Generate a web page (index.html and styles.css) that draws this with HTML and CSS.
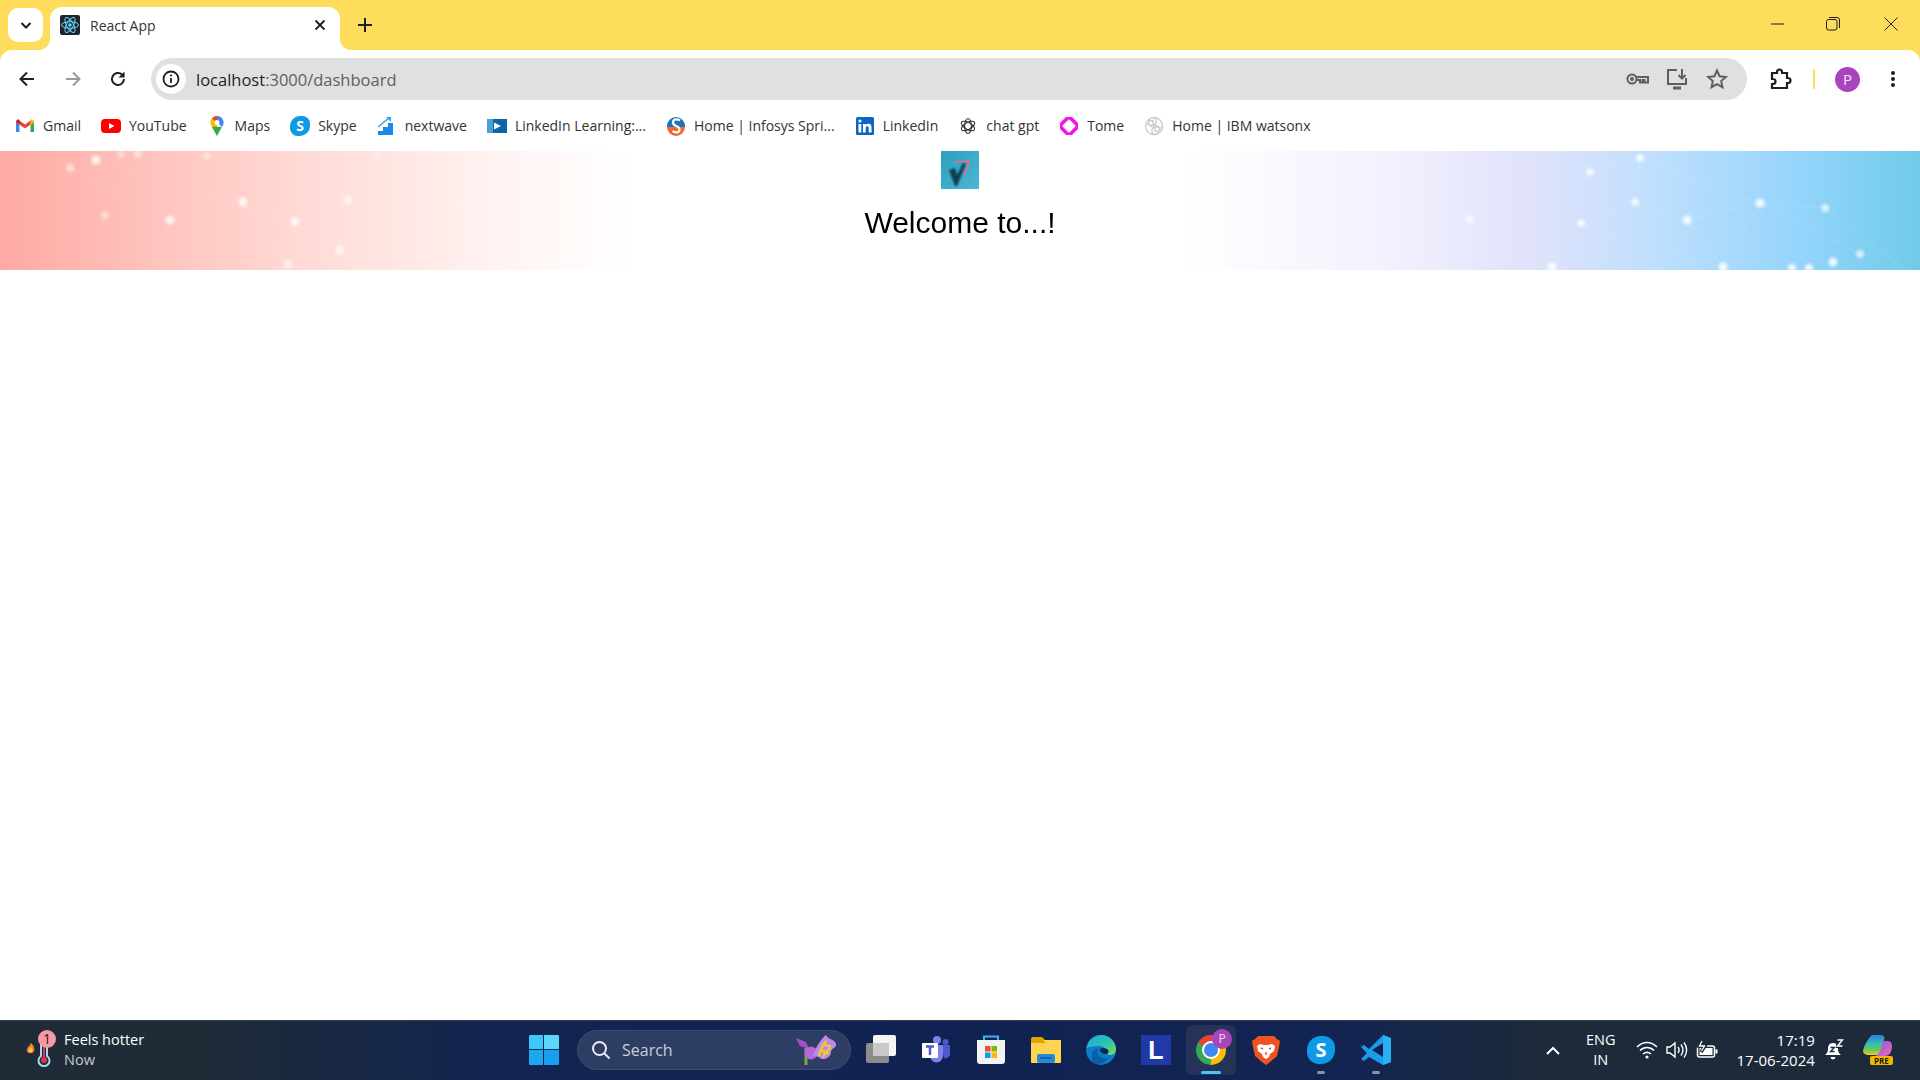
FILE: index.html
```html
<!DOCTYPE html>
<html lang="en">
  <head>
    <meta charset="UTF-8" />
    <meta name="viewport" content="width=device-width, initial-scale=1.0" />
    <title>React App</title>
    <link rel="stylesheet" href="styles.css">
  </head>
  <body>
    <div class="browser">
      <div class="tabstrip">
        <div class="tab-search">
          <svg width="14" height="14" viewBox="0 0 14 14"><path d="M2.5 5l4.5 4.5L11.500 5" fill="none" stroke="#1f1f1f" stroke-width="2"/></svg>
        </div>
        <div class="tab">
          <svg class="favicon" viewBox="0 0 20 20">
            <rect width="20" height="20" rx="2" fill="#20232a"/>
            <g fill="none" stroke="#61dafb" stroke-width="1">
              <ellipse cx="10" cy="10" rx="8.500" ry="3.300"/>
              <ellipse cx="10" cy="10" rx="8.500" ry="3.300" transform="rotate(60 10 10)"/>
              <ellipse cx="10" cy="10" rx="8.500" ry="3.300" transform="rotate(120 10 10)"/>
            </g>
            <circle cx="10" cy="10" r="1.700" fill="#61dafb"/>
          </svg>
          <span class="tab-title">React App</span>
          <svg class="tab-close" width="12" height="12" viewBox="0 0 12 12"><path d="M1.500 1.500l9 9M10.500 1.500l-9 9" stroke="#1f1f1f" stroke-width="1.800"/></svg>
        </div>
        <svg class="new-tab" width="14" height="14" viewBox="0 0 14 14"><path d="M7 0v14M0 7h14" stroke="#1f1f1f" stroke-width="2"/></svg>
        <div class="window-controls">
          <svg width="14" height="14" viewBox="0 0 14 14"><path d="M0 7h13" stroke="#1f1f1f" stroke-width="1"/></svg>
          <svg width="14" height="14" viewBox="0 0 14 14" fill="none" stroke="#1f1f1f" stroke-width="1"><rect x="0.500" y="2.500" width="10.500" height="10.500" rx="2"/><path d="M3 .5h8a2.500 2.500 0 0 1 2.500 2.500v8"/></svg>
          <svg width="14" height="14" viewBox="0 0 14 14"><path d="M.5.500l13 13M13.500.500l-13 13" stroke="#1f1f1f" stroke-width="1"/></svg>
        </div>
      </div>

      <div class="toolbar">
        <div class="nav-buttons">
          <svg width="18" height="18" viewBox="0 0 18 18" fill="none" stroke="#1f1f1f" stroke-width="2"><path d="M16 9H3M9 2.500L2.500 9 9 15.500"/></svg>
          <svg width="18" height="18" viewBox="0 0 18 18" fill="none" stroke="#9a9a9a" stroke-width="2"><path d="M2 9h13M9 2.500L15.500 9 9 15.500"/></svg>
          <svg width="18" height="18" viewBox="0 0 18 18" fill="none" stroke="#1f1f1f" stroke-width="2"><path d="M15 9a6 6 0 1 1-1.800-4.300L15 6.500"/><path d="M15.500 1.500v6h-6" fill="#1f1f1f" stroke="none"/></svg>
        </div>
        <div class="address-bar">
          <div class="site-info">
            <svg width="18" height="18" viewBox="0 0 18 18"><circle cx="9" cy="9" r="7.500" fill="none" stroke="#1f1f1f" stroke-width="1.800"/><path d="M9 8v5" stroke="#1f1f1f" stroke-width="1.800"/><circle cx="9" cy="5.500" r="1.100" fill="#1f1f1f"/></svg>
          </div>
          <div class="url"><span class="url-host">localhost</span>:3000/dashboard</div>
          <div class="address-actions">
            <svg width="24" height="24" viewBox="0 0 24 24" fill="none" stroke="#5f5f5f" stroke-width="2"><circle cx="7" cy="12" r="4.500"/><circle cx="7" cy="12" r="1" fill="#5f5f5f"/><path d="M11.500 10H23v5.500h-3.500V13h-2v2.500h-2.500V13h-3.500"/></svg>
            <svg width="24" height="24" viewBox="0 0 24 24" fill="none" stroke="#5f5f5f" stroke-width="2"><path d="M12 3H3v14h18v-6"/><path d="M8 21h8" stroke-width="3"/><path d="M17 2v9M13.500 8l3.500 3.500L20.500 8"/></svg>
            <svg width="24" height="24" viewBox="0 0 24 24" fill="none" stroke="#5f5f5f" stroke-width="2"><path d="M12 3.500l2.600 5.700 6.200.7-4.600 4.200 1.300 6.100L12 17.100l-5.500 3.100 1.300-6.100-4.600-4.200 6.200-.7z"/></svg>
          </div>
        </div>
        <div class="toolbar-right">
          <svg class="puzzle" width="24" height="24" viewBox="0 0 24 24" fill="none" stroke="#1f1f1f" stroke-width="2.200"><path d="M4 6h5V5a2.500 2.500 0 0 1 5 0v1h5v5h1a2.500 2.500 0 0 1 0 5h-1v5H4v-4h1a2.500 2.500 0 0 0 0-5H4z"/></svg>
          <div class="toolbar-divider"></div>
          <div class="avatar">P</div>
          <svg class="kebab" width="6" height="18" viewBox="0 0 6 18" fill="#1f1f1f"><circle cx="3" cy="3" r="2"/><circle cx="3" cy="9" r="2"/><circle cx="3" cy="15" r="2"/></svg>
        </div>
      </div>

      <div class="bookmarks">
        <div class="bookmark">
          <svg viewBox="0 0 20 20"><path d="M1 6v10h3.500V9z" fill="#4285f4"/><path d="M15.500 9v7H19V6z" fill="#34a853"/><path d="M1 6l9 6.500L19 6l-2-2.500-7 5-7-5z" fill="#ea4335"/><path d="M1 6c0-2 2-3 3.500-2L4.500 9z" fill="#c5221f"/><path d="M19 6c0-2-2-3-3.500-2v5z" fill="#fbbc04"/></svg>
          <span>Gmail</span>
        </div>
        <div class="bookmark">
          <svg viewBox="0 0 20 20"><rect y="3" width="20" height="14" rx="4" fill="#f00"/><path d="M8 7l5.500 3L8 13z" fill="#fff"/></svg>
          <span>YouTube</span>
        </div>
        <div class="bookmark">
          <svg viewBox="0 0 20 20"><path d="M10 0a6.500 6.500 0 0 0-5 10.700L10 20z" fill="#fbbc04"/><path d="M5 10.700L10 20l5-9.300z" fill="#34a853"/><path d="M10 0a6.500 6.500 0 0 0-5 2.400l5 4.100z" fill="#ea4335"/><path d="M10 0a6.500 6.500 0 0 1 5 10.700L10 6.500z" fill="#4285f4"/><circle cx="10" cy="6.500" r="2.500" fill="#fff"/></svg>
          <span>Maps</span>
        </div>
        <div class="bookmark">
          <div class="skype-badge">S</div>
          <span>Skype</span>
        </div>
        <div class="bookmark">
          <svg viewBox="0 0 20 20"><path d="M1 19v-4h5v-4h5V7h5v12z" fill="#1a88e8"/><path d="M1 11L12 2" stroke="#2aa4f4" stroke-width="1.500"/><path d="M9 1h5v5z" fill="#2aa4f4"/></svg>
          <span>nextwave</span>
        </div>
        <div class="bookmark">
          <svg viewBox="0 0 20 20"><rect y="3" width="20" height="14" fill="#0a66a8"/><rect y="3" width="6" height="14" fill="#49a0d8"/><path d="M7 6.500l7 3.500-7 3.500z" fill="#fff"/></svg>
          <span>LinkedIn Learning:...</span>
        </div>
        <div class="bookmark">
          <svg viewBox="0 0 20 20"><path d="M1 11a9 9 0 0 0 9 9 9 9 0 0 0 9-9z" fill="#f26a2e"/><path d="M1 10a9 9 0 0 1 18 0v1H1z" fill="#1b75bb"/><path d="M14 4.500c-2.500-2-7-1.500-7 2 0 4.500 6.500 2.500 6.500 7 0 3.500-4.500 3.500-7 1.500" fill="none" stroke="#fff" stroke-width="2.200"/></svg>
          <span>Home | Infosys Spri...</span>
        </div>
        <div class="bookmark">
          <svg viewBox="0 0 20 20"><rect x="1" y="1" width="18" height="18" rx="1.500" fill="#0a66c2"/><rect x="3.500" y="8" width="2.800" height="8.500" fill="#fff"/><circle cx="4.900" cy="5" r="1.600" fill="#fff"/><path d="M8 8h2.700v1.200c.6-.9 1.600-1.400 2.800-1.400 2.300 0 3 1.500 3 3.800v4.900h-2.800v-4.300c0-1.200-.3-2-1.400-2-1.200 0-1.600.9-1.600 2v4.300H8z" fill="#fff"/></svg>
          <span>LinkedIn</span>
        </div>
        <div class="bookmark">
          <svg viewBox="0 0 20 20" fill="none" stroke="#333" stroke-width="1.100"><ellipse cx="10" cy="10" rx="3.400" ry="7.500"/><ellipse cx="10" cy="10" rx="3.400" ry="7.500" transform="rotate(60 10 10)"/><ellipse cx="10" cy="10" rx="3.400" ry="7.500" transform="rotate(120 10 10)"/></svg>
          <span>chat gpt</span>
        </div>
        <div class="bookmark">
          <svg viewBox="0 0 20 20"><path d="M7 1h6l6 6v6l-6 6H7l-6-6V7z" fill="#f312e8"/><path d="M10 4.500L15.500 10 10 15.500 4.500 10z" fill="#fff" stroke="#fff" stroke-width="2" stroke-linejoin="round"/></svg>
          <span>Tome</span>
        </div>
        <div class="bookmark">
          <svg viewBox="0 0 20 20" fill="none" stroke="#c9c9c9" stroke-width="1.300"><circle cx="10" cy="10" r="8.500"/><circle cx="7" cy="7" r="2.500"/><circle cx="13" cy="13" r="2.500"/><path d="M10 1.500c3 2 3 5 0 8.500s-3 6.500 0 8.500M2 8c3-1 4 1 6 3M18 12c-3 1-4-1-6-3"/></svg>
          <span>Home | IBM watsonx</span>
        </div>
      </div>
    </div>

    <div class="hero">
      <svg class="hero-dots" viewBox="0 0 1920 119" preserveAspectRatio="none">
        <defs><filter id="soft"><feGaussianBlur stdDeviation="1.500"/></filter></defs>
        <g fill="none" stroke="#fff" stroke-opacity=".13">
          <path d="M96 9L295 71 340 99M70 17L170 69M243 51L288 113M348 49L295 71"/>
          <path d="M1640 7L1635 51 1581 72 1552 116M1590 21L1640 7 1760 52 1825 57 1920 130M1635 51L1687 69 1760 52 1723 116 1687 69M1760 52L1860 103M1470 68L1470 119M1581 72L1723 116"/>
        </g>
        <g fill="#fff" filter="url(#soft)" opacity=".85">
          <circle cx="70" cy="17" r="4" opacity=".6"/><circle cx="96" cy="9" r="4.500"/><circle cx="121" cy="3" r="4" opacity=".5"/><circle cx="138" cy="3" r="4" opacity=".6"/>
          <circle cx="207" cy="5" r="4" opacity=".5"/><circle cx="377" cy="5" r="4" opacity=".4"/><circle cx="243" cy="51" r="4.500" opacity=".9"/><circle cx="348" cy="49" r="4.500" opacity=".7"/>
          <circle cx="459" cy="52" r="4" opacity=".3"/><circle cx="105" cy="64" r="4" opacity=".5"/><circle cx="170" cy="69" r="4.500" opacity=".9"/><circle cx="295" cy="71" r="4.500" opacity=".9"/>
          <circle cx="340" cy="99" r="4.500" opacity=".8"/><circle cx="288" cy="113" r="4.500" opacity=".7"/>
          <circle cx="1640" cy="7" r="4" opacity=".9"/><circle cx="1590" cy="21" r="4" opacity=".9"/><circle cx="1635" cy="51" r="4" opacity=".9"/><circle cx="1760" cy="52" r="4.500"/>
          <circle cx="1825" cy="57" r="4" opacity=".8"/><circle cx="1470" cy="68" r="4" opacity=".8"/><circle cx="1581" cy="72" r="4" opacity=".9"/><circle cx="1687" cy="69" r="4.500"/>
          <circle cx="1860" cy="103" r="4" opacity=".8"/><circle cx="1833" cy="111" r="4.500"/><circle cx="1552" cy="116" r="4.500"/><circle cx="1723" cy="116" r="4.500"/>
          <circle cx="1792" cy="117" r="4"/><circle cx="1809" cy="117" r="4"/>
        </g>
      </svg>
      <svg class="hero-logo" viewBox="0 0 38 38">
        <defs>
          <linearGradient id="logoBg" x1="0" y1="0" x2="1" y2="1"><stop offset="0" stop-color="#2f9fbb"/><stop offset="1" stop-color="#4cb7d3"/></linearGradient>
          <filter id="logoShade"><feGaussianBlur stdDeviation=".8"/></filter>
        </defs>
        <rect width="38" height="38" fill="url(#logoBg)"/>
        <path d="M8 19l6-2 2 7 6-12 3 1-9 22h-2z" fill="#0a3a52" filter="url(#logoShade)"/>
        <path d="M14 10.500h14l-5 14" fill="none" stroke="#f0688f" stroke-width="1.600"/>
      </svg>
      <h1 class="hero-title">Welcome to...!</h1>
    </div>

    <div class="content"></div>

    <div class="taskbar">
      <div class="weather">
        <svg class="weather-icon" width="36" height="40" viewBox="0 0 36 40">
          <path d="M11 14c3 3 4 5 3 8s-6 3-7 0 2-4 4-8z" fill="#f08030"/>
          <path d="M11 18c1 2 2 3 1 4.500s-3 1-3.500 0 1-2 2.500-4.500z" fill="#ffd050"/>
          <path d="M21 8v19a5.500 5.500 0 1 0 6 0V8z" fill="#1d2c3c" stroke="#a8d8f0" stroke-width="2"/>
          <circle cx="24" cy="31" r="3" fill="#e0334d"/>
          <path d="M24 18v12" stroke="#e0334d" stroke-width="2"/>
          <circle cx="27" cy="10" r="9" fill="#f79aa4"/>
          <text x="27" y="15" text-anchor="middle" class="weather-count">1</text>
        </svg>
        <div class="weather-text">
          <div class="weather-title">Feels hotter</div>
          <div class="weather-sub">Now</div>
        </div>
      </div>

      <div class="taskbar-apps">
        <div class="app">
          <svg viewBox="0 0 30 30"><path d="M0 1a1 1 0 0 1 1-1h13v14H0z" fill="#3cc8f8"/><path d="M15 0h14a1 1 0 0 1 1 1v13H15z" fill="#5ad8fc"/><path d="M0 15h14v15H1a1 1 0 0 1-1-1z" fill="#1ca8ee"/><path d="M15 15h15v14a1 1 0 0 1-1 1H15z" fill="#1a9cf0"/></svg>
        </div>
        <div class="search-box">
          <svg width="20" height="20" viewBox="0 0 20 20" fill="none" stroke="#e8ebf0" stroke-width="2"><circle cx="8.500" cy="8.500" r="6.500"/><path d="M13 13l5.500 5.500"/></svg>
          <span class="search-label">Search</span>
          <svg class="search-art" width="48" height="32" viewBox="0 0 48 32">
            <path d="M16 14v17" stroke="#6cae3a" stroke-width="3"/>
            <path d="M6 4l10 4 3 7-9-3z" fill="#a050c8"/>
            <circle cx="21" cy="19" r="6.500" fill="#b866d8"/>
            <path d="M23 22C26 12 32 4 36 1c2 5 9 4 10 9 1 4-5 4-5 8 0 6-8 9-11 6-2-2-5-1-7-2z" fill="#b98ae6"/>
            <path d="M29 22c1-6 3-10 7-15M33 23c2-4 4-7 8-9M30 16l9 4M33 10l8 3" stroke="#f0c830" stroke-width="2.500" fill="none"/>
          </svg>
        </div>
        <div class="app">
          <svg viewBox="0 0 30 30"><rect x="7" y="0" width="23" height="21" rx="2" fill="#f4f4f4"/><rect x="0" y="8" width="23" height="20" rx="2" fill="#8c8c8c"/><rect x="7" y="8" width="16" height="13" fill="#c9c9c9"/></svg>
        </div>
        <div class="app">
          <svg viewBox="0 0 30 30"><circle cx="16" cy="5" r="4" fill="#7b83eb"/><circle cx="24.500" cy="7" r="3" fill="#5059c9"/><path d="M20 10h9v9a4.500 4.500 0 0 1-6 4z" fill="#5059c9"/><path d="M9 10h13v11a6.500 6.500 0 0 1-13 0z" fill="#7b83eb"/><rect x="1" y="8" width="16" height="15" rx="1" fill="#fff"/><path d="M5 11.500h8M9 11.500V20" stroke="#5059c9" stroke-width="2.500"/></svg>
        </div>
        <div class="app">
          <svg viewBox="0 0 30 30"><path d="M8 5V1.500h14V5" fill="none" stroke="#35b8f0" stroke-width="2"/><path d="M1 5h28v21a3 3 0 0 1-3 3H4a3 3 0 0 1-3-3z" fill="#f3f3f3"/><rect x="9" y="11" width="5.500" height="5.500" fill="#f25022"/><rect x="15.500" y="11" width="5.500" height="5.500" fill="#7fba00"/><rect x="9" y="17.500" width="5.500" height="5.500" fill="#00a4ef"/><rect x="15.500" y="17.500" width="5.500" height="5.500" fill="#ffb900"/></svg>
        </div>
        <div class="app">
          <svg viewBox="0 0 30 30"><path d="M0 4a2 2 0 0 1 2-2h9l3 3h-14z" fill="#e0a300"/><path d="M0 5h30v22a1 1 0 0 1-1 1H1a1 1 0 0 1-1-1z" fill="#ffd54f"/><path d="M0 5h12l3 3H0z" fill="#e0a300"/><rect x="6" y="19" width="18" height="9" rx="2" fill="#2a88d8"/><path d="M9 23h12" stroke="#0f5fa8" stroke-width="1.500"/></svg>
        </div>
        <div class="app">
          <svg viewBox="0 0 30 30">
            <defs>
              <linearGradient id="edgeTop" x1="0" y1="0" x2="1" y2="1"><stop offset="0" stop-color="#1ba4d8"/><stop offset=".6" stop-color="#30c8a8"/><stop offset="1" stop-color="#7fdc5a"/></linearGradient>
            </defs>
            <circle cx="15" cy="15" r="15" fill="#0c7cc8"/>
            <path d="M.5 13C2 5 8 0 15 0c9 0 15 7 15 14 0 6-6 7-9 5 0-5-4-9-9-8-5 0-9 1-11.500 2z" fill="url(#edgeTop)"/>
            <path d="M12 13c-3 7 3 12 10 10-3 5-10 8-15 4-3-7 0-13 5-14z" fill="#0a5ca8"/>
            <path d="M21 19c-3 0-7-1-7-4 0-2 3-3 7-1 2 1 2 4 0 5z" fill="#0f2252"/>
          </svg>
        </div>
        <div class="app">
          <div class="app-letter">L</div>
        </div>
        <div class="app app-active">
          <div class="chrome-icon"><div class="chrome-core"></div></div>
          <div class="chrome-profile">P</div>
          <div class="app-indicator"></div>
        </div>
        <div class="app">
          <svg viewBox="0 0 30 30"><path d="M7 1h16l3 3 3 2-1 6-2 9-7 6-4 3-4-3-7-6-2-9-1-6 3-2z" fill="#f1521f"/><path d="M9 9l4 1h4l4-1 3 2-1 5-4 3-1 3-3 2-3-2-1-3-4-3-1-5z" fill="#fff"/><path d="M12 14l-2-1M18 14l2-1M15 17v3" stroke="#f1521f" stroke-width="1.500"/></svg>
        </div>
        <div class="app">
          <div class="skype-tile">S</div>
          <div class="app-dot"></div>
        </div>
        <div class="app">
          <svg viewBox="0 0 30 30"><path d="M22 0L8 14 3 10 0 12l6 6-6 6 3 2 5-4 14 8 8-3V3z" fill="#1a9ce8"/><path d="M22 0v30l8-3V3z" fill="#2bb0f4"/><path d="M22 8L11 15l11 7z" fill="#0f2252"/></svg>
          <div class="app-dot"></div>
        </div>
      </div>

      <div class="tray">
        <svg class="tray-chevron" width="14" height="9" viewBox="0 0 14 9"><path d="M1 8l6-6 6 6" fill="none" stroke="#fff" stroke-width="2"/></svg>
        <div class="tray-lang"><div>ENG</div><div>IN</div></div>
        <div class="tray-icons">
          <svg width="22" height="20" viewBox="0 0 22 20" fill="none" stroke="#fff" stroke-width="1.600"><path d="M1 7c6-6 14-6 20 0M4 10.500c4-4 10-4 14 0M7 14c2.500-2 5.500-2 8 0"/><circle cx="11" cy="17" r="1.600" fill="#fff" stroke="none"/></svg>
          <svg width="22" height="20" viewBox="0 0 22 20" fill="none" stroke="#fff" stroke-width="1.400"><path d="M1 7v6h3l5 4V3L4 7z"/><path d="M12 7c1.500 2 1.500 4 0 6M15 4.500c2.500 3.500 2.500 7.500 0 11M18 2.500c3.500 4.500 3.500 10.500 0 15"/></svg>
          <svg width="22" height="20" viewBox="0 0 22 20"><rect x="1.500" y="6" width="17" height="11" rx="2" fill="none" stroke="#fff" stroke-width="1.500"/><rect x="3.500" y="8" width="13" height="7" fill="#fff"/><rect x="19.500" y="9.500" width="2" height="4" fill="#fff"/><path d="M6 0L3 6h6l-4 6" fill="none" stroke="#1c2a3a" stroke-width="3.500"/><path d="M6 1L3.500 6h5L5.500 11" fill="none" stroke="#fff" stroke-width="1.300"/></svg>
        </div>
        <div class="tray-clock"><div>17:19</div><div>17-06-2024</div></div>
        <svg class="tray-bell" width="20" height="22" viewBox="0 0 20 22"><path d="M9 4c-4 0-5 3-5 6 0 3-1 4-3 6h16c-2-2-3-3-3-6 0-3-1-6-5-6z" fill="#fff"/><path d="M6.500 18a2.500 2.500 0 0 0 5 0z" fill="#fff"/><path d="M6.500 8.500h4l-4 4h4" fill="none" stroke="#1c2a3a" stroke-width="1.300"/><rect x="12" y="0" width="8" height="9" fill="#1c2a3a"/><path d="M13.500 1h5l-5 6h5" fill="none" stroke="#fff" stroke-width="1.500"/></svg>
        <div class="copilot">
          <svg width="29" height="23" viewBox="0 0 29 23">
            <defs>
              <linearGradient id="cpLeft" x1="0" y1="0" x2="0" y2="1"><stop offset="0" stop-color="#2a7ce0"/><stop offset=".45" stop-color="#38c0b0"/><stop offset=".75" stop-color="#70c850"/><stop offset="1" stop-color="#e8d030"/></linearGradient>
              <linearGradient id="cpRight" x1="0" y1="0" x2="1" y2="1"><stop offset="0" stop-color="#7a5ae8"/><stop offset="1" stop-color="#f868b0"/></linearGradient>
            </defs>
            <path d="M9 0h9c2 0 3 1 3.500 3L17 20H6c-4 0-6-2-6-4 0-2 4-12 9-16z" fill="url(#cpLeft)"/>
            <path d="M20 6h5c3 0 4 3 4 5 0 5-2 10-7 10H12c4-1 6-6 8-15z" fill="url(#cpRight)"/>
          </svg>
          <span class="copilot-tag">PRE</span>
        </div>
      </div>
    </div>
  </body>
</html>
```

FILE: styles.css
```css
html, body {
  margin: 0;
  padding: 0;
  height: 100%;
}

body {
  display: flex;
  flex-direction: column;
  height: 100vh;
  overflow: hidden;
  background-color: #fff;
  font-family: "Open Sans", "Noto Sans", sans-serif;
  color: #1f1f1f;
}

/* browser chrome */
.browser {
  background-color: #ffdd5c;
}

.tabstrip {
  display: flex;
  align-items: flex-end;
  height: 50px;
  position: relative;
}

.tab-search {
  display: flex;
  align-items: center;
  justify-content: center;
  width: 35px;
  height: 34px;
  margin: 0 0 8px 8px;
  background-color: #fff;
  border-radius: 10px;
}

.tab {
  display: flex;
  align-items: center;
  width: 290px;
  height: 43px;
  box-sizing: border-box;
  margin-left: 7px;
  padding: 0 14px 7px 10px;
  background-color: #fff;
  border-radius: 12px 12px 0 0;
  position: relative;
}

.tab::before,
.tab::after {
  content: "";
  position: absolute;
  bottom: 0;
  width: 12px;
  height: 12px;
}

.tab::before {
  left: -12px;
  background: radial-gradient(circle at 0 0, transparent 12px, #fff 12.500px);
}

.tab::after {
  right: -12px;
  background: radial-gradient(circle at 100% 0, transparent 12px, #fff 12.500px);
}

.favicon {
  width: 20px;
  height: 20px;
  flex: none;
}

.tab-title {
  flex: 1;
  margin-left: 10px;
  font-size: 14px;
  color: #333;
}

.tab-close {
  flex: none;
}

.new-tab {
  margin: 0 0 18px 18px;
}

.window-controls {
  display: flex;
  align-items: center;
  gap: 41px;
  margin: 0 22px 19px auto;
}

.window-controls svg:last-child {
  margin-left: 3px;
}

.toolbar {
  display: flex;
  align-items: center;
  height: 58px;
  background-color: #fff;
  border-radius: 12px 12px 0 0;
}

.nav-buttons {
  display: flex;
  align-items: center;
  gap: 27.500px;
  width: 151px;
  box-sizing: border-box;
  padding-left: 18px;
}

.address-bar {
  display: flex;
  align-items: center;
  width: 1596px;
  height: 42px;
  box-sizing: border-box;
  padding: 0 18px 0 5px;
  background-color: #e0e0e0;
  border-radius: 21px;
}

.site-info {
  display: flex;
  align-items: center;
  justify-content: center;
  width: 30px;
  height: 30px;
  background-color: #fff;
  border-radius: 50%;
}

.url {
  flex: 1;
  margin-left: 10px;
  font-size: 16.500px;
  color: #5f5f5f;
}

.url-host {
  color: #1f1f1f;
}

.address-actions {
  display: flex;
  align-items: center;
  gap: 16px;
}

.toolbar-right {
  display: flex;
  align-items: center;
  flex: 1;
  padding-left: 21px;
}

.toolbar-divider {
  width: 2px;
  height: 20px;
  margin: 0 20px 0 21px;
  background-color: #ffdd5c;
}

.avatar {
  display: flex;
  align-items: center;
  justify-content: center;
  width: 25px;
  height: 25px;
  background-color: #a845bd;
  border-radius: 50%;
  color: #f5e6f8;
  font-size: 15px;
}

.kebab {
  margin-left: 30px;
}

.bookmarks {
  display: flex;
  align-items: center;
  gap: 20px;
  height: 43px;
  padding: 0 0 8px 15px;
  box-sizing: border-box;
  background-color: #fff;
}

.bookmark {
  display: flex;
  align-items: center;
  gap: 8px;
  font-size: 14px;
  color: #333;
  white-space: nowrap;
}

.bookmark svg {
  width: 20px;
  height: 20px;
  flex: none;
}

.skype-badge {
  width: 20px;
  height: 20px;
  background-color: #0d9ae6;
  border-radius: 50% 38% 50% 38%;
  color: #fff;
  font-weight: 700;
  font-size: 14px;
  line-height: 20px;
  text-align: center;
}

/* page */
.hero {
  display: flex;
  flex-direction: column;
  align-items: center;
  flex: none;
  height: 119px;
  position: relative;
  background: linear-gradient(90deg,
    #ffa9a3 0%, #ffc6c0 9%, #ffe0dc 18%, #fff3f2 26%, #fff 33%,
    #fff 61.500%, #f3f1fe 72%, #dfe2fb 80%, #c0dffd 86%, #93d4fb 94%, #6fcbe8 100%);
}

.hero-dots {
  position: absolute;
  left: 0;
  top: 0;
  width: 100%;
  height: 100%;
}

.hero-logo {
  width: 38px;
  height: 38px;
  position: relative;
}

.hero-title {
  margin: 17px 0 0;
  font-family: "Liberation Sans", Arial, sans-serif;
  font-size: 30px;
  font-weight: 400;
  color: #000;
  position: relative;
}

.content {
  flex: 1;
  background-color: #fff;
}

/* windows taskbar */
.taskbar {
  display: flex;
  align-items: center;
  flex: none;
  height: 60px;
  box-sizing: border-box;
  padding-bottom: 1px;
  border-top: 1px solid #343f52;
  background: linear-gradient(90deg, #1f2b36 0%, #1f2b36 10%, #132550 25%, #0f2252 50%, #122552 70%, #1c2a3a 80%, #1c2a3a 100%);
  color: #fff;
}

.weather {
  display: flex;
  align-items: center;
  flex: none;
  width: 519px;
  box-sizing: border-box;
  padding-left: 20px;
}

.weather-icon {
  margin-top: -2px;
}

.weather-count {
  font-family: "Open Sans", sans-serif;
  font-size: 14px;
  fill: #222;
}

.weather-text {
  margin-left: 8px;
  font-size: 14.500px;
  line-height: 20px;
}

.weather-sub {
  color: #c8ccd0;
}

.taskbar-apps {
  display: flex;
  align-items: center;
  gap: 5px;
}

.app {
  display: flex;
  align-items: center;
  justify-content: center;
  width: 50px;
  height: 50px;
  position: relative;
}

.app svg {
  width: 30px;
  height: 30px;
}

.app-active {
  background-color: #253358;
  border-radius: 6px;
}

.app-indicator {
  position: absolute;
  left: 15px;
  bottom: 1px;
  width: 20px;
  height: 3px;
  background-color: #4fc3f7;
  border-radius: 2px;
}

.app-dot {
  position: absolute;
  left: 21px;
  bottom: 1px;
  width: 8px;
  height: 3px;
  background-color: #8c93a3;
  border-radius: 2px;
}

.app-letter {
  width: 30px;
  height: 30px;
  background-color: #1f3aa8;
  color: #fff;
  font-family: "Liberation Sans", sans-serif;
  font-weight: 700;
  font-size: 25px;
  line-height: 30px;
  text-align: center;
}

.chrome-icon {
  display: flex;
  align-items: center;
  justify-content: center;
  width: 30px;
  height: 30px;
  border-radius: 50%;
  background: conic-gradient(from 300deg, #ea4335 0 120deg, #fbbc04 120deg 240deg, #34a853 240deg 360deg);
}

.chrome-core {
  width: 14px;
  height: 14px;
  background-color: #4285f4;
  border: 2px solid #fff;
  border-radius: 50%;
}

.chrome-profile {
  position: absolute;
  left: 26px;
  top: 4px;
  width: 20px;
  height: 20px;
  background-color: #a845bd;
  border-radius: 50%;
  color: #f0d8f5;
  font-size: 12px;
  line-height: 20px;
  text-align: center;
}

.skype-tile {
  width: 28px;
  height: 28px;
  background-color: #0d9ae6;
  border-radius: 50% 42% 50% 42%;
  color: #fff;
  font-weight: 700;
  font-size: 20px;
  line-height: 28px;
  text-align: center;
}

.search-box {
  display: flex;
  align-items: center;
  width: 274px;
  height: 40px;
  box-sizing: border-box;
  margin: 0 0 0 3px;
  padding: 0 12px 0 13px;
  background-color: #2e3d63;
  border: 1px solid #3c4b70;
  border-radius: 20px;
}

.search-label {
  flex: 1;
  margin-left: 11px;
  font-size: 16px;
  color: #c9ced8;
}

.tray {
  display: flex;
  align-items: center;
  flex: 1;
  padding-left: 145px;
}

.tray-chevron {
  flex: none;
}

.tray-lang {
  margin-left: 26px;
  font-size: 14.500px;
  line-height: 20px;
  text-align: center;
}

.tray-icons {
  display: flex;
  align-items: center;
  gap: 8px;
  margin-left: 20px;
}

.tray-clock {
  margin-left: 19px;
  font-size: 15px;
  line-height: 20px;
  text-align: right;
}

.tray-bell {
  margin-left: 9px;
}

.copilot {
  width: 29px;
  height: 30px;
  margin-left: 19px;
  position: relative;
}

.copilot-tag {
  position: absolute;
  right: -1px;
  bottom: 0;
  width: 23px;
  height: 9px;
  background-color: #f4b400;
  border-radius: 2px;
  color: #1a1a1a;
  font-size: 8px;
  font-weight: 700;
  line-height: 9px;
  text-align: center;
}
```
